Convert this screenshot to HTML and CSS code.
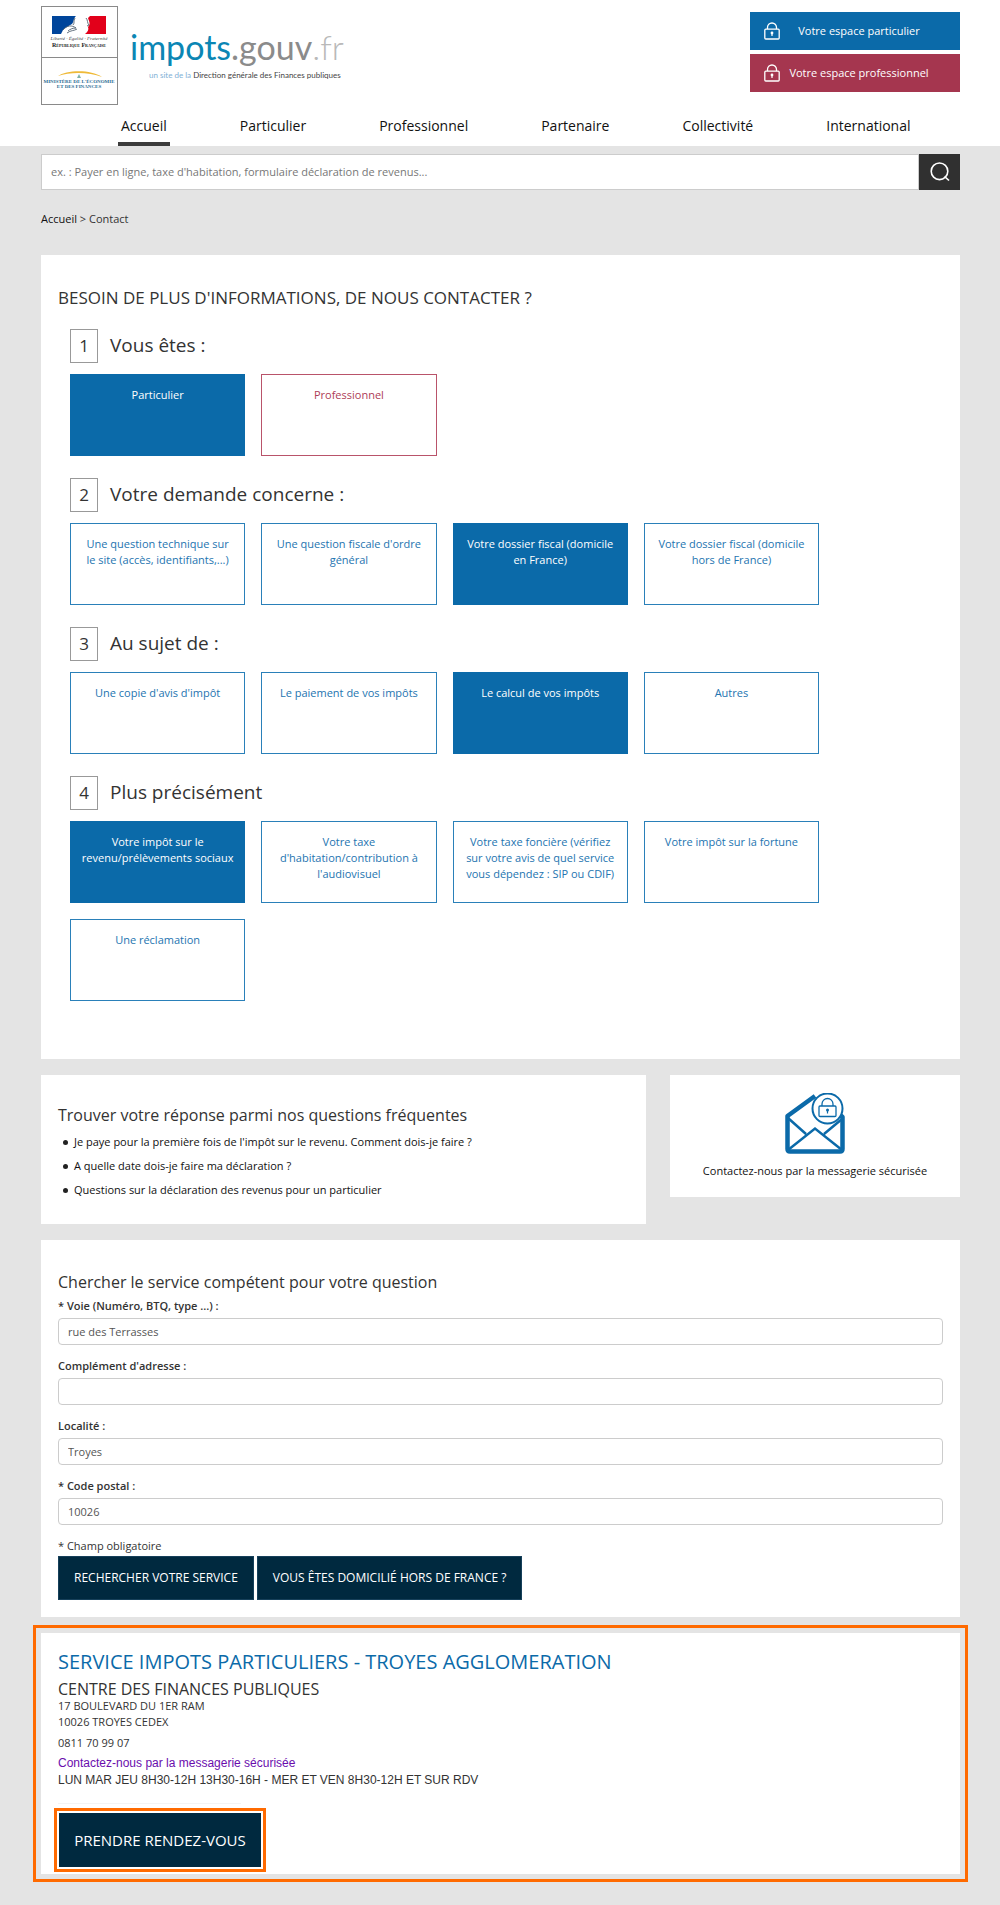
FILE: index.html
```html
<!DOCTYPE html>
<html lang="fr">
<head>
<meta charset="utf-8">
<meta name="viewport" content="width=device-width, initial-scale=1">
<title>Contact | impots.gouv.fr</title>
<link rel="stylesheet" href="styles.css">
</head>
<body>
<svg class="defs" width="0" height="0" aria-hidden="true">
  <symbol id="lock" viewBox="0 0 16 18">
    <path d="M3.500 7V5.500a4.500 4.500 0 0 1 9 0V7" fill="none" stroke="currentColor" stroke-width="1.300"/>
    <rect x=".8" y="7.200" width="14.400" height="9.800" rx="1" fill="none" stroke="currentColor" stroke-width="1.300"/>
    <circle cx="8" cy="11" r="1.400" fill="currentColor"/>
    <path d="M8 11v3" stroke="currentColor" stroke-width="1.200"/>
  </symbol>
</svg>

<header class="header">
  <div class="wrap brand-row">
    <a class="brand" href="#">
      <svg class="emblem" viewBox="0 0 77 99" width="77" height="99" role="img" aria-label="République Française">
        <rect x=".5" y=".5" width="76" height="98" fill="#fff" stroke="#8a8a8a"/>
        <path d="M0 51.500H77" stroke="#8a8a8a"/>
        <path d="M11 10H35C32 13 33 16 31 18C28 20 25 21 22 24L20 28H11Z" fill="#00459b"/>
        <path d="M49 10H65V28H44C47 26 48 23 47 21C50 18 48 15 47 12Z" fill="#e2001a"/>
        <path d="M22 24C26 19 31 19 35 22C32 22 29 23 27 25M26 27C30 24 33 25 36 23M34 12C32 15 34 17 32 19M45 12C47 14 46 17 48 19L46 20" fill="none" stroke="#51616f" stroke-width=".9"/>
        <text x="38" y="34" class="motto" text-anchor="middle">Liberté · Égalité · Fraternité</text>
        <text x="38" y="41" class="republic" text-anchor="middle">République Française</text>
        <path d="M17 70C25 64 50 63 61 71C48 66 29 66 17 70Z" fill="#efba38"/>
        <path d="M38 68L40 72H36Z" fill="#7fb2a8"/>
        <text x="38" y="77" class="ministry" text-anchor="middle">MINISTÈRE DE L'ÉCONOMIE</text>
        <text x="38" y="82" class="ministry" text-anchor="middle">ET DES FINANCES</text>
      </svg>
      <span class="wordmark">
        <span class="name"><span class="name-a">impots</span><span class="name-b">.gouv</span><span class="name-c">.fr</span></span>
        <span class="tagline"><span>un site de la</span> Direction générale des Finances publiques</span>
      </span>
    </a>
    <div class="spaces">
      <a class="space space-part" href="#"><svg width="16" height="18"><use href="#lock"/></svg><span>Votre espace particulier</span></a>
      <a class="space space-pro" href="#"><svg width="16" height="18"><use href="#lock"/></svg><span>Votre espace professionnel</span></a>
    </div>
  </div>
  <nav class="wrap nav">
    <a class="current" href="#">Accueil</a>
    <a href="#">Particulier</a>
    <a href="#">Professionnel</a>
    <a href="#">Partenaire</a>
    <a href="#">Collectivité</a>
    <a href="#">International</a>
  </nav>
</header>

<main class="wrap main">
  <form class="search">
    <input type="search" aria-label="Rechercher" placeholder="ex. : Payer en ligne, taxe d'habitation, formulaire déclaration de revenus...">
    <button type="button" aria-label="Lancer la recherche">
      <svg width="20" height="20" viewBox="0 0 20 20" fill="none" stroke="#fff" stroke-width="1.600"><circle cx="9.500" cy="9.300" r="8.300"/><path d="M14.500 14.500L19 18.500"/></svg>
    </button>
  </form>
  <p class="crumbs"><a href="#">Accueil</a> &gt; Contact</p>

  <section class="card contact">
    <h1>BESOIN DE PLUS D'INFORMATIONS, DE NOUS CONTACTER ?</h1>
    <div class="step">
      <h2><span class="num">1</span>Vous êtes :</h2>
      <div class="tiles">
        <button type="button" class="tile on">Particulier</button>
        <button type="button" class="tile pro">Professionnel</button>
      </div>
    </div>
    <div class="step">
      <h2><span class="num">2</span>Votre demande concerne :</h2>
      <div class="tiles">
        <button type="button" class="tile">Une question technique sur le&nbsp;site (accès, identifiants,...)</button>
        <button type="button" class="tile">Une question fiscale d'ordre général</button>
        <button type="button" class="tile on">Votre dossier fiscal (domicile en France)</button>
        <button type="button" class="tile">Votre dossier fiscal (domicile hors de France)</button>
      </div>
    </div>
    <div class="step">
      <h2><span class="num">3</span>Au sujet de :</h2>
      <div class="tiles">
        <button type="button" class="tile">Une copie d'avis d'impôt</button>
        <button type="button" class="tile">Le paiement de vos impôts</button>
        <button type="button" class="tile on">Le calcul de vos impôts</button>
        <button type="button" class="tile">Autres</button>
      </div>
    </div>
    <div class="step">
      <h2><span class="num">4</span>Plus précisément</h2>
      <div class="tiles">
        <button type="button" class="tile on">Votre impôt sur le revenu/prélèvements sociaux</button>
        <button type="button" class="tile">Votre taxe d'habitation/contribution à l'audiovisuel</button>
        <button type="button" class="tile">Votre taxe foncière (vérifiez sur votre avis de quel service vous dépendez : SIP ou CDIF)</button>
        <button type="button" class="tile">Votre impôt sur la fortune</button>
        <button type="button" class="tile">Une réclamation</button>
      </div>
    </div>
  </section>

  <div class="duo">
    <section class="card faq">
      <h2 class="title">Trouver votre réponse parmi nos questions fréquentes</h2>
      <ul>
        <li><a href="#">Je paye pour la première fois de l'impôt sur le revenu. Comment dois-je faire ?</a></li>
        <li><a href="#">A quelle date dois-je faire ma déclaration ?</a></li>
        <li><a href="#">Questions sur la déclaration des revenus pour un particulier</a></li>
      </ul>
    </section>
    <a class="card mail" href="#">
      <svg width="62" height="62" viewBox="0 0 62 62" fill="none" stroke="#0b6aa9">
        <path d="M31 3L3.500 23V56Q3.500 58.500 6 58.500H56Q58.500 58.500 58.500 56V24L54 20" stroke-width="4.500" stroke-linejoin="round"/>
        <path d="M4 25L22 41M58 26L40 41M4 57L31 35.500L58 57" stroke-width="2.500"/>
        <circle cx="43.500" cy="15.500" r="15" fill="#fff" stroke-width="2"/>
        <path d="M38 13V11a5.500 5.500 0 0 1 11 0v2" stroke-width="1.300"/>
        <rect x="35" y="13" width="17" height="10.500" rx="1" stroke-width="1.300"/>
        <circle cx="43.500" cy="17" r="1.500" fill="#0b6aa9" stroke="none"/>
        <path d="M43.500 17v3.500" stroke-width="1.200"/>
      </svg>
      <span>Contactez-nous par la messagerie sécurisée</span>
    </a>
  </div>

  <form class="card finder">
    <h2 class="title">Chercher le service compétent pour votre question</h2>
    <div class="field"><label for="voie">* Voie (Numéro, BTQ, type ...) :</label><input id="voie" type="text" value="rue des Terrasses"></div>
    <div class="field"><label for="comp">Complément d'adresse :</label><input id="comp" type="text"></div>
    <div class="field"><label for="ville">Localité :</label><input id="ville" type="text" value="Troyes"></div>
    <div class="field"><label for="cp">* Code postal :</label><input id="cp" type="text" value="10026"></div>
    <p class="note">* Champ obligatoire</p>
    <div class="actions">
      <button type="button" class="dark">RECHERCHER VOTRE SERVICE</button>
      <button type="button" class="dark">VOUS ÊTES DOMICILIÉ HORS DE FRANCE ?</button>
    </div>
  </form>

  <section class="card result">
    <h2>SERVICE IMPOTS PARTICULIERS - TROYES AGGLOMERATION</h2>
    <h3>CENTRE DES FINANCES PUBLIQUES</h3>
    <address>17 BOULEVARD DU 1ER RAM<br>10026 TROYES CEDEX</address>
    <p class="phone">0811 70 99 07</p>
    <p class="hours"><a href="#">Contactez-nous par la messagerie sécurisée</a><br>LUN MAR JEU 8H30-12H 13H30-16H - MER ET VEN 8H30-12H ET SUR RDV</p>
    <div class="booking"><button type="button" class="dark rdv">PRENDRE RENDEZ-VOUS</button></div>
  </section>
</main>
</body>
</html>
```
FILE: styles.css
```css
* { box-sizing: border-box; }
body {
  margin: 0;
  background: #e4e4e4;
  color: #333;
  font: 11px/18px "Open Sans", "Noto Sans", sans-serif;
}
h1, h2, h3, p, ul { margin: 0; padding: 0; font-weight: 400; }
a { color: #111; text-decoration: none; }
button, input { font: inherit; border-radius: 0; margin: 0; }
.defs { display: block; height: 0; }
.wrap { padding-left: 41px; padding-right: 40px; }

/* Header */
.header { background: #fff; }
.brand-row { display: flex; justify-content: space-between; align-items: flex-start; padding-top: 6px; height: 104px; }
.brand { display: flex; gap: 12px; }
.emblem { flex: none; }
.motto { font: italic 5px "Liberation Serif", serif; fill: #444; }
.republic { font: bold small-caps 6px "Liberation Serif", serif; fill: #222; }
.ministry { font: bold 5px "Liberation Serif", serif; fill: #2b6d94; }
.wordmark { display: flex; flex-direction: column; padding-top: 20px; }
.name { font: 300 34px/42px Lato, sans-serif; white-space: nowrap; }
.name-a { color: #0b86b4; font-weight: 400; }
.name-b { color: #8b8b8b; font-weight: 400; }
.name-c { color: #b9b9b9; }
.tagline { padding-left: 19px; font: 8px/14px Lato, sans-serif; color: #444; white-space: nowrap; }
.tagline span { color: #7fb0d6; }
.spaces { display: flex; flex-direction: column; gap: 4px; width: 210px; padding-top: 6px; }
.space { display: flex; align-items: center; height: 38px; padding-left: 14px; color: #fff; }
.space svg { flex: none; }
.space span { flex: 1; text-align: center; padding-right: 22px; }
.space-part { background: #0b6aa9; }
.space-pro { background: #a5364f; }
.nav { display: flex; gap: 67px; }
.nav a { padding: 6px 3px 0; font-size: 14px; line-height: 32px; border-bottom: 4px solid transparent; }
.nav a:first-child { margin-left: 77px; }
.nav .current { border-color: #3c3c3c; }

/* Search and breadcrumb */
.main { padding-top: 8px; padding-bottom: 29px; }
.search { display: flex; height: 36px; }
.search input { flex: 1; min-width: 0; padding: 0 9px; border: 1px solid #ccc; background: #fff; appearance: none; }
.search input::placeholder { color: #777; }
.search button { display: grid; place-items: center; width: 41px; padding: 0; border: 0; background: #303030; }
.crumbs { margin: 20px 0 27px; }

/* Cards */
.card { background: #fff; padding: 30px 17px 17px; margin-bottom: 16px; }
.contact { padding-top: 31px; padding-bottom: 58px; }
.contact h1 { font-size: 17px; line-height: 24px; margin-bottom: 19px; }
.step { padding: 0 12px; }
.step + .step { margin-top: 22px; }
.step h2 { display: flex; align-items: flex-start; gap: 12px; font-size: 19px; line-height: 32px; margin-bottom: 11px; }
.num { width: 28px; height: 34px; border: 1px solid #999; font-size: 17px; line-height: 32px; text-align: center; }
.tiles { display: grid; grid-template-columns: repeat(4, 1fr); gap: 16px; width: 87%; }
.tile {
  display: flex; justify-content: center; align-items: flex-start;
  height: 82px; padding: 12px 9px; border: 1px solid #2a80b9;
  background: #fff; color: #2474b0; line-height: 16px; text-align: center;
}
.tile.on { background: #0b6aa9; border-color: #0b6aa9; color: #fff; }
.tile.pro { border-color: #b9536a; color: #ae3d57; }

.title { font-size: 16px; line-height: 24px; margin-bottom: 3px; }
.duo { display: grid; grid-template-columns: 605fr 290fr; gap: 24px; align-items: start; margin-bottom: 16px; }
.duo .card { margin: 0; }
.faq { padding-top: 28px; padding-bottom: 22px; }
.faq ul { list-style: none; padding-left: 5px; }
.faq li { display: flex; align-items: center; gap: 6px; line-height: 24px; }
.faq li::before { content: ""; width: 5px; height: 5px; border-radius: 50%; background: #222; }
.duo .mail { display: flex; flex-direction: column; align-items: center; gap: 7px; padding: 18px 10px 17px; }

/* Service finder */
.field { display: flex; flex-direction: column; gap: 3px; margin-bottom: 12px; }
.field label { font-weight: 600; }
.field input { height: 27px; padding: 0 9px; border: 1px solid #ccc; border-radius: 4px; background: #fff; color: #555; }
.note { margin-bottom: 1px; }
.actions { display: flex; gap: 3px; }
.dark { height: 44px; padding: 0 15px; border: 1px solid #16405a; background: #00293f; color: #fff; font-size: 12px; }

/* Selected service */
.result { margin: 0; padding: 16px 17px 7px; outline: 3px solid #ff6a00; outline-offset: 5px; }
.result h2 { font-size: 20px; line-height: 26px; color: #0b6aa9; margin-bottom: 5px; }
.result h3 { font-size: 16px; line-height: 18px; }
address, .phone { font-style: normal; line-height: 16px; }
.phone { margin: 5px 0 4px; }
.hours { font: 12px/17px "Liberation Sans", Arial, sans-serif; }
.hours a { color: #6a0dad; }
.booking { width: 183px; margin-top: 14px; padding: 9px 0 0 1px; border-top: 1px solid #f4f4f4; }
.rdv { width: 202px; height: 54px; font-size: 15px; border: 0; white-space: nowrap; outline: 3px solid #ff6a00; outline-offset: 2px; }
```
